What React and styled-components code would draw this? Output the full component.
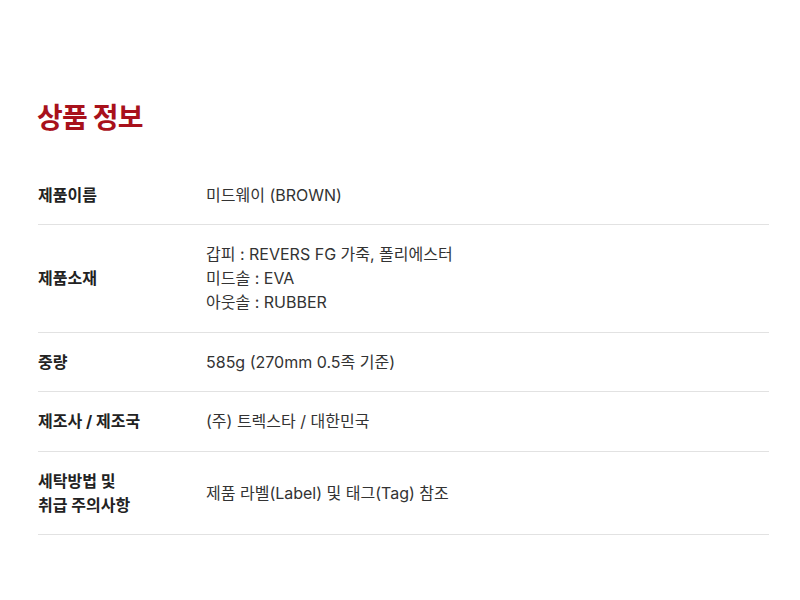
import React from "react";
import styled, { createGlobalStyle } from "styled-components";

const Global = createGlobalStyle`
  html, body { margin: 0; padding: 0; background: #fff; }
  body { font-family: "Inter", "Noto Sans CJK KR", sans-serif; color: #222; }
`;

const Page = styled.div`
  padding: 100px 31px 0 37px;
`;

const Title = styled.h2`
  margin: 0 0 30px;
  font-size: 28px;
  line-height: 36px;
  font-weight: 700;
  color: #a8111b;
  letter-spacing: -0.8px;
`;

const Table = styled.div`
  display: flex;
  flex-direction: column;
  margin-left: 1px;
`;

const Row = styled.div`
  display: grid;
  grid-template-columns: 168px 1fr;
  align-items: center;
  padding: ${(p) => (p.$tall ? "17px 0 18px" : "17px 0")};
  border-bottom: 1px solid #e2e2e2;
`;

const Label = styled.div`
  font-size: 16px;
  line-height: 24px;
  font-weight: 700;
  color: #222;
`;

const Value = styled.div`
  font-size: 16px;
  line-height: 24px;
  font-weight: 400;
  color: #333;
`;

const rows = [
  { label: ["제품이름"], value: ["미드웨이 (BROWN)"] },
  {
    label: ["제품소재"],
    value: ["갑피 : REVERS FG 가죽, 폴리에스터", "미드솔 : EVA", "아웃솔 : RUBBER"],
    tall: true,
  },
  { label: ["중량"], value: ["585g (270mm 0.5족 기준)"] },
  { label: ["제조사 / 제조국"], value: ["(주) 트렉스타 / 대한민국"], tall: true },
  { label: ["세탁방법 및", "취급 주의사항"], value: ["제품 라벨(Label) 및 태그(Tag) 참조"] },
];

const Lines = ({ items }) =>
  items.map((t, i) => <div key={i}>{t}</div>);

export default function App() {
  return (
    <>
      <Global />
      <Page>
        <Title>상품 정보</Title>
        <Table>
          {rows.map((r, i) => (
            <Row key={i} $tall={r.tall}>
              <Label><Lines items={r.label} /></Label>
              <Value><Lines items={r.value} /></Value>
            </Row>
          ))}
        </Table>
      </Page>
    </>
  );
}
